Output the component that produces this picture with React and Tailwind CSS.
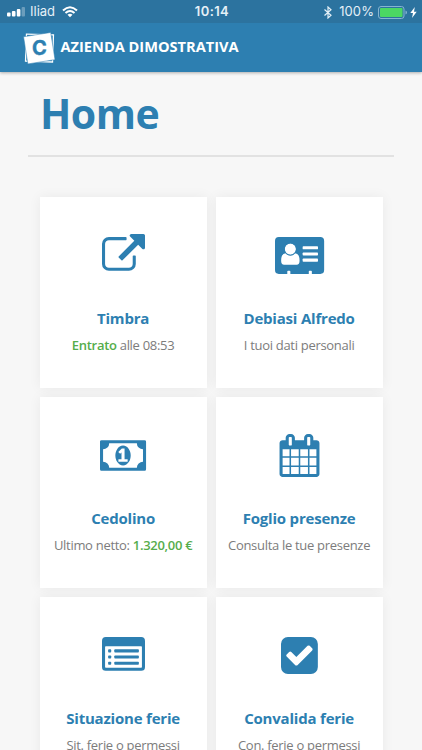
import React from "react";

const BRAND = "#2d7fb1";

function Glyph({ width, children }) {
  return (
    <svg
      className="mt-[37px] h-[43px] shrink-0 overflow-visible"
      viewBox={`0 0 ${width} 1792`}
      fill={BRAND}
      fillRule="evenodd"
    >
      {children}
    </svg>
  );
}

const ExternalLink = () => (
  <Glyph width={1792}>
    <path d="M1408 928v320q0 119-84.5 203.5t-203.5 84.5h-832q-119 0-203.5-84.5t-84.5-203.5v-832q0-119 84.5-203.5t203.5-84.5h704q14 0 23 9t9 23v64q0 14-9 23t-23 9h-704q-66 0-113 47t-47 113v832q0 66 47 113t113 47h832q66 0 113-47t47-113v-320q0-14 9-23t23-9h64q14 0 23 9t9 23zm384-864v512q0 26-19 45t-45 19-45-19l-176-176-652 652q-10 10-23 10t-23-10l-114-114q-10-10-10-23t10-23l652-652-176-176q-19-19-19-45t19-45 45-19h512q26 0 45 19t19 45z" />
  </Glyph>
);

const AddressCard = () => (
  <Glyph width={2048}>
    <path d="M160 128H1888Q2048 128 2048 288V1504Q2048 1664 1888 1664H1536V1568Q1536 1536 1504 1536H1440Q1408 1536 1408 1568V1664H640V1568Q640 1536 608 1536H544Q512 1536 512 1568V1664H160Q0 1664 0 1504V288Q0 128 160 128Z" />
    <g fill="#fff">
      <circle cx="640" cy="628" r="232" />
      <path d="M448 800Q530 892 640 892Q750 892 832 800Q1024 812 1024 1110Q1024 1280 900 1280H380Q256 1280 256 1110Q256 812 448 800Z" />
      <circle cx="640" cy="628" r="258" fill="none" stroke={BRAND} strokeWidth="36" />
      <rect x="1152" y="512" width="640" height="128" rx="30" />
      <rect x="1152" y="768" width="640" height="128" rx="30" />
      <rect x="1152" y="1024" width="640" height="128" rx="30" />
    </g>
  </Glyph>
);

const Banknote = () => (
  <Glyph width={1920}>
    <path d="M768 1152h384v-96h-128v-448h-114l-148 137 77 80q42-37 55-57h2v288h-128v96zm512-256q0 70-21 142t-59.5 134-101.5 101-138 39-138-39-101.5-101-59.5-134-21-142 21-142 59.5-134 101.5-101 138-39 138 39 101.5 101 59.5 134 21 142zm512 256v-512q-106 0-181-75t-75-181h-1152q0 106-75 181t-181 75v512q106 0 181 75t75 181h1152q0-106 75-181t181-75zm128-832v1152q0 26-19 45t-45 19h-1792q-26 0-45-19t-19-45v-1152q0-26 19-45t45-19h1792q26 0 45 19t19 45z" />
  </Glyph>
);

const Calendar = () => (
  <Glyph width={1792}>
    <path d="M192 1664h288v-288h-288v288zm352 0h320v-288h-320v288zm-352-352h288v-320h-288v320zm352 0h320v-320h-320v320zm-352-384h288v-288h-288v288zm736 736h320v-288h-320v288zm-384-736h320v-288h-320v288zm768 736h288v-288h-288v288zm-384-352h320v-320h-320v320zm-352-864v-288q0-13-9.500-22.500t-22.500-9.500h-64q-13 0-22.500 9.500t-9.500 22.500v288q0 13 9.500 22.500t22.500 9.500h64q13 0 22.500-9.500t9.500-22.500zm736 864h288v-320h-288v320zm-384-384h320v-288h-320v288zm384 0h288v-288h-288v288zm32-480v-288q0-13-9.500-22.500t-22.500-9.500h-64q-13 0-22.500 9.500t-9.500 22.500v288q0 13 9.500 22.500t22.500 9.500h64q13 0 22.500-9.500t9.500-22.500zm384-64v1280q0 52-38 90t-90 38h-1408q-52 0-90-38t-38-90v-1280q0-52 38-90t90-38h128v-96q0-66 47-113t113-47h64q66 0 113 47t47 113v96h384v-96q0-66 47-113t113-47h64q66 0 113 47t47 113v96h128q52 0 90 38t38 90z" />
  </Glyph>
);

const ListPanel = () => (
  <Glyph width={1792}>
    <path d="M160 128H1632Q1792 128 1792 288V1376Q1792 1536 1632 1536H160Q0 1536 0 1376V288Q0 128 160 128ZM160 512Q128 512 128 544V1376Q128 1408 160 1408H1632Q1664 1408 1664 1376V544Q1664 512 1632 512Z" />
    {[640, 896, 1152].map((y) => (
      <g key={y}>
        <rect x="256" y={y} width="128" height="128" rx="32" />
        <rect x="512" y={y} width="1024" height="128" rx="32" />
      </g>
    ))}
  </Glyph>
);

const CheckSquare = () => (
  <Glyph width={1536}>
    <path d="M685 1299l614-614q19-19 19-45t-19-45l-102-102q-19-19-45-19t-45 19l-467 467-211-211q-19-19-45-19t-45 19l-102 102q-19 19-19 45t19 45l358 358q19 19 45 19t45-19zm851-883v960q0 119-84.5 203.5t-203.5 84.5h-960q-119 0-203.5-84.5t-84.5-203.5v-960q0-119 84.5-203.500t203.500-84.500h960q119 0 203.500 84.500t84.500 203.500z" />
  </Glyph>
);

function Card({ icon, title, children }) {
  return (
    <div className="flex h-[191px] flex-col items-center bg-white whitespace-nowrap shadow-[0_0_12px_rgba(0,0,0,0.06)]">
      {icon}
      <h2 className="mt-[30px] text-[15px] leading-[22px] font-bold tracking-[-0.2px] text-[#2d7fb1]">{title}</h2>
      <p className="mt-[6px] text-[13px] leading-[20px] tracking-[-0.3px] text-[#7c7c7c]">{children}</p>
    </div>
  );
}

const Green = ({ children }) => <span className="font-semibold text-[#55ad4b]">{children}</span>;

function StatusBar() {
  return (
    <div className="grid h-[23px] grid-cols-3 items-center bg-[#2c739f] pt-px pr-[5px] pl-[7px] font-['Inter',sans-serif] text-[13px] text-[#e4f0f7]">
      <div className="flex items-center">
        <svg width="18" height="10" viewBox="0 0 18 10" fill="#fff">
          <rect x="0" y="5.500" width="3.600" height="4" rx="1" />
          <rect x="4.900" y="4" width="3.600" height="5.500" rx="1" />
          <rect x="9.800" y="2" width="3.600" height="7.500" rx="1" />
          <rect x="14.600" y="0" width="3.400" height="9.500" rx="1" opacity="0.3" />
        </svg>
        <span className="ml-[5px]">Iliad</span>
        <svg className="ml-[7px]" width="16" height="12" viewBox="0 0 16 12" fill="none" stroke="#fff" strokeWidth="2">
          <path d="M1 4.400Q8-2 15 4.400M3.500 7Q8 3 12.500 7" />
          <path d="M8 11.300L5.500 8.800Q8 6.700 10.500 8.800Z" fill="#fff" stroke="none" />
        </svg>
      </div>
      <div className="text-center font-semibold tracking-[0.4px]">10:14</div>
      <div className="flex items-center justify-end">
        <svg width="8" height="13" viewBox="0 0 8 13" fill="none" stroke="#e4f0f7" strokeWidth="1.200">
          <path d="M0.500 3.500L7 9.300L4 12V1L7 3.700L0.500 9.500" />
        </svg>
        <span className="ml-[7px] tracking-[0.1px]">100%</span>
        <svg className="ml-[4px]" width="30" height="13" viewBox="0 0 30 13">
          <rect x="0.500" y="0.500" width="25.500" height="12" rx="2.500" fill="none" stroke="#86b5d1" />
          <rect x="2" y="2" width="22.500" height="9" rx="1" fill="#4bd763" />
          <path d="M27.500 4.500Q29 5 29 6.500T27.500 8.500Z" fill="#86b5d1" />
        </svg>
        <svg className="ml-[2px]" width="7" height="11" viewBox="0 0 7 11" fill="#fff">
          <path d="M4.800 0L0.300 6H3L2 11L6.700 4.700H4Z" />
        </svg>
      </div>
    </div>
  );
}

function Logo() {
  return (
    <svg width="34" height="34" viewBox="0 0 34 34">
      <rect x="4" y="3.500" width="27" height="27" fill="#2d7fb1" stroke="#fff" strokeWidth="1.300" transform="rotate(2 17 17)" />
      <rect x="3.500" y="3.500" width="27.500" height="27.500" fill="#fff" stroke="#2d7fb1" strokeWidth="0.500" transform="rotate(-9 17 17)" />
      <text x="17.300" y="24" textAnchor="middle" fill="#2d7fb1" stroke="#2d7fb1" strokeWidth="0.400" fontFamily="Inter, sans-serif" fontWeight="700" fontSize="20">C</text>
    </svg>
  );
}

export default function App() {
  return (
    <div className="h-[750px] w-[422px] overflow-hidden bg-[#f7f7f7] font-['Open_Sans',sans-serif]">
      <header className="relative bg-[#2d7fb1] shadow-[0_1px_3px_rgba(0,0,0,0.3)]">
        <StatusBar />
        <div className="flex h-[49px] items-center pl-[22px]">
          <Logo />
          <span className="mb-[2px] ml-[4.500px] text-[14.600px] font-bold text-white">AZIENDA DIMOSTRATIVA</span>
        </div>
      </header>
      <main>
        <h1 className="mx-[28px] flex h-[85px] items-center border-b-2 border-[#e2e2e2] pt-px pl-[12px] text-[41px] font-bold tracking-[-0.500px] text-[#2d7fb1]">
          Home
        </h1>
        <div className="ml-[39.600px] mt-[40px] grid w-[343px] grid-cols-2 gap-[9px]">
          <Card icon={<ExternalLink />} title="Timbra"><Green>Entrato</Green> alle 08:53</Card>
          <Card icon={<AddressCard />} title="Debiasi Alfredo">I tuoi dati personali</Card>
          <Card icon={<Banknote />} title="Cedolino">Ultimo netto: <Green>1.320,00 €</Green></Card>
          <Card icon={<Calendar />} title="Foglio presenze">Consulta le tue presenze</Card>
          <Card icon={<ListPanel />} title="Situazione ferie">Sit. ferie o permessi</Card>
          <Card icon={<CheckSquare />} title="Convalida ferie">Con. ferie o permessi</Card>
        </div>
      </main>
    </div>
  );
}
